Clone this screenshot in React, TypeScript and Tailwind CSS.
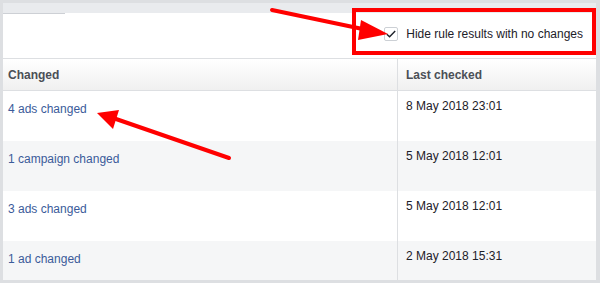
import React from "react";

const rows = [
  { label: "4 ads changed", date: "8 May 2018 23:01", bg: "bg-white" },
  { label: "1 campaign changed", date: "5 May 2018 12:01", bg: "bg-[#f5f6f7]" },
  { label: "3 ads changed", date: "5 May 2018 12:01", bg: "bg-white" },
  { label: "1 ad changed", date: "2 May 2018 15:31", bg: "bg-[#f5f6f7]" },
];

export default function App() {
  return (
    <div className="relative w-[600px] h-[283px] overflow-hidden bg-[#dddfe2] pt-[3px] pl-[3px] pr-[4px] pb-[3px] font-['Liberation_Sans',Arial,sans-serif] text-[12px] leading-[16px]">
      <div className="flex flex-col h-full">
        <div className="h-[10px] shrink-0 bg-[#e9ebee]" />
        <div className="flex-1 flex flex-col bg-white overflow-hidden">
          <div className="relative h-[45px] shrink-0 flex items-center justify-end pr-[13px] pb-[3px]">
            <div className="absolute left-0 top-0 w-[62px] h-px bg-[#cdd0d5]" />
            <div className="flex items-center gap-[8px]">
              <div className="w-[14px] h-[14px] rounded-[2px] border border-[#ccd0d5] bg-white flex items-center justify-center">
                <svg width="10" height="8" viewBox="0 0 10 8" fill="none">
                  <path d="M0.8 4.2 L3.6 6.8 L9.2 1" stroke="#1d2129" strokeWidth="1.4" />
                </svg>
              </div>
              <span className="text-[#1d2129]">Hide rule results with no changes</span>
            </div>
          </div>
          <div className="flex shrink-0 border-t border-b border-[#dddfe2] h-[33px] bg-linear-to-b from-white to-[#f0f0f0] font-bold text-[#4b4f56]">
            <div className="w-[395px] pl-[5px] flex items-center border-r border-[#dddfe2]">Changed</div>
            <div className="flex-1 pl-[8px] flex items-center">Last checked</div>
          </div>
          {rows.map((r) => (
            <div key={r.label} className={`flex h-[50px] shrink-0 ${r.bg}`}>
              <div className="w-[395px] pl-[5px] pt-[10px] text-[#3b5b9a] border-r border-[#dddfe2]">{r.label}</div>
              <div className="flex-1 pl-[8px] pt-[7px] text-[#1d2129]">{r.date}</div>
            </div>
          ))}
        </div>
      </div>

      {/* annotations */}
      <div className="absolute left-[352px] top-[8px] w-[244px] h-[47px] border-[4px] border-[#ff0000]" />
      <svg className="absolute left-0 top-0" width="600" height="283" viewBox="0 0 600 283">
        <line x1="272" y1="10" x2="365" y2="29.5" stroke="#ff0000" strokeWidth="4" strokeLinecap="round" />
        <polygon points="388,34 361,20 358,40" fill="#ff0000" />
        <line x1="229" y1="158" x2="116" y2="119" stroke="#ff0000" strokeWidth="4" strokeLinecap="round" />
        <polygon points="97,113 119,110 113,129" fill="#ff0000" />
      </svg>
    </div>
  );
}
